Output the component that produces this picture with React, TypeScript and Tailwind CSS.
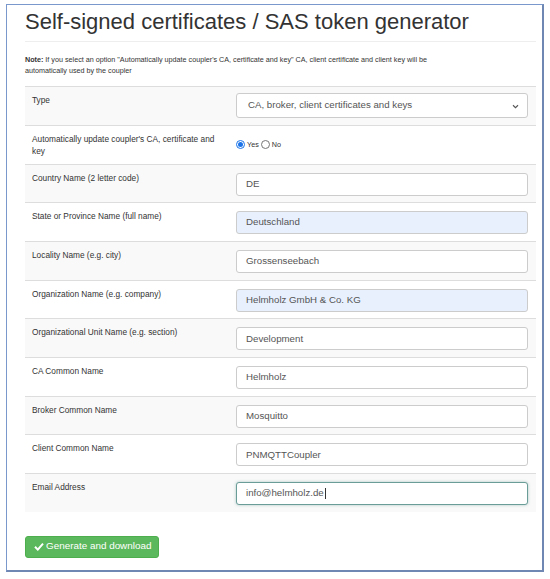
import React from "react";

const rows: { label: string; kind: "select" | "radio" | "input"; value?: string; auto?: boolean; focus?: boolean }[] = [
  { label: "Type", kind: "select", value: "CA, broker, client certificates and keys" },
  { label: "Automatically update coupler's CA, certificate and key", kind: "radio" },
  { label: "Country Name (2 letter code)", kind: "input", value: "DE" },
  { label: "State or Province Name (full name)", kind: "input", value: "Deutschland", auto: true },
  { label: "Locality Name (e.g. city)", kind: "input", value: "Grossenseebach" },
  { label: "Organization Name (e.g. company)", kind: "input", value: "Helmholz GmbH & Co. KG", auto: true },
  { label: "Organizational Unit Name (e.g. section)", kind: "input", value: "Development" },
  { label: "CA Common Name", kind: "input", value: "Helmholz" },
  { label: "Broker Common Name", kind: "input", value: "Mosquitto" },
  { label: "Client Common Name", kind: "input", value: "PNMQTTCoupler" },
  { label: "Email Address", kind: "input", value: "info@helmholz.de", focus: true },
];

function Field({ r }: { r: (typeof rows)[number] }) {
  if (r.kind === "select") {
    return (
      <div className="mt-[6px] h-[25px] w-full rounded-[3px] border border-[#ccc] bg-white flex items-center pl-[11px] pr-[8px] text-[9.7px] text-[#555]">
        <span className="flex-1">{r.value}</span>
        <svg width="7" height="5" viewBox="0 0 8 6" className="mt-[1px]">
          <path d="M1 1.5 L4 4.5 L7 1.5" fill="none" stroke="#555" strokeWidth="1.3" />
        </svg>
      </div>
    );
  }
  if (r.kind === "radio") {
    return (
      <div className="mt-[12px] flex items-center text-[7.2px] text-[#333]">
        <span className="w-[9px] h-[9px] rounded-full border border-[#1a73e8] bg-white flex items-center justify-center">
          <span className="w-[5px] h-[5px] rounded-full bg-[#1a73e8]" />
        </span>
        <span className="ml-[2px] mt-[2px]">Yes</span>
        <span className="ml-[2px] w-[9px] h-[9px] rounded-full border border-[#767676] bg-white" />
        <span className="ml-[2px] mt-[2px]">No</span>
      </div>
    );
  }
  const cls = r.focus
    ? "border-[#6a9c98] shadow-[0_0_3px_rgba(90,150,140,0.5)] bg-white"
    : r.auto
    ? "border-[#ccc] bg-[#e8f0fe]"
    : "border-[#ccc] bg-white";
  return (
    <div className={`mt-[8px] h-[23px] w-full rounded-[3px] border ${cls} flex items-center pl-[9px] text-[9.7px] text-[#555]`}>
      <span>{r.value}</span>
      {r.focus && <span className="w-px h-[11px] bg-[#333] ml-[1px]" />}
    </div>
  );
}

export default function App() {
  return (
    <div className="w-[550px] h-[579px] bg-white pt-[4px] pl-[6px]" style={{ fontFamily: '"Liberation Sans", Arial, sans-serif' }}>
      <div className="w-[538px] h-[568px] border border-[#7a98cc] border-r-2 border-b-2 border-r-[#6f88b3] border-b-[#6f88b3] pl-[18px] pr-[6px]">
        <h1 className="mt-[5px] text-[22px] leading-[1.1] text-[#333] font-normal">
          Self-signed certificates / SAS token generator
        </h1>
        <div className="mt-[7px] border-t border-[#eee]" />
        <div className="mt-[12px] w-[445px] text-[7.2px] leading-[11px] text-[#333]">
          <b>Note:</b> If you select an option "Automatically update coupler's CA, certificate and key" CA, client certificate and client key will be automatically used by the coupler
        </div>
        <div className="mt-[10px]">
          {rows.map((r, i) => (
            <div
              key={i}
              className={`flex h-[38.7px] border-t border-[#ddd] ${i % 2 === 0 ? "bg-[#f9f9f9]" : "bg-white"}`}
            >
              <div className="w-[204px] shrink-0 px-[7px] pt-[7px] text-[8.3px] leading-[12px] text-[#333]">
                {r.label}
              </div>
              <div className="flex-1 pl-[7px] pr-[8px]">
                <Field r={r} />
              </div>
            </div>
          ))}
        </div>
        <button className="mt-[24px] h-[22px] w-[134px] rounded-[3px] bg-[#5cb85c] border border-[#4cae4c] text-white text-[9.9px] flex items-center pl-[8px]">
          <svg width="10" height="9" viewBox="0 0 10 9" className="mr-[2px]">
            <path d="M1 4.8 L3.8 7.6 L9 1.6" fill="none" stroke="white" strokeWidth="2" />
          </svg>
          Generate and download
        </button>
      </div>
    </div>
  );
}
